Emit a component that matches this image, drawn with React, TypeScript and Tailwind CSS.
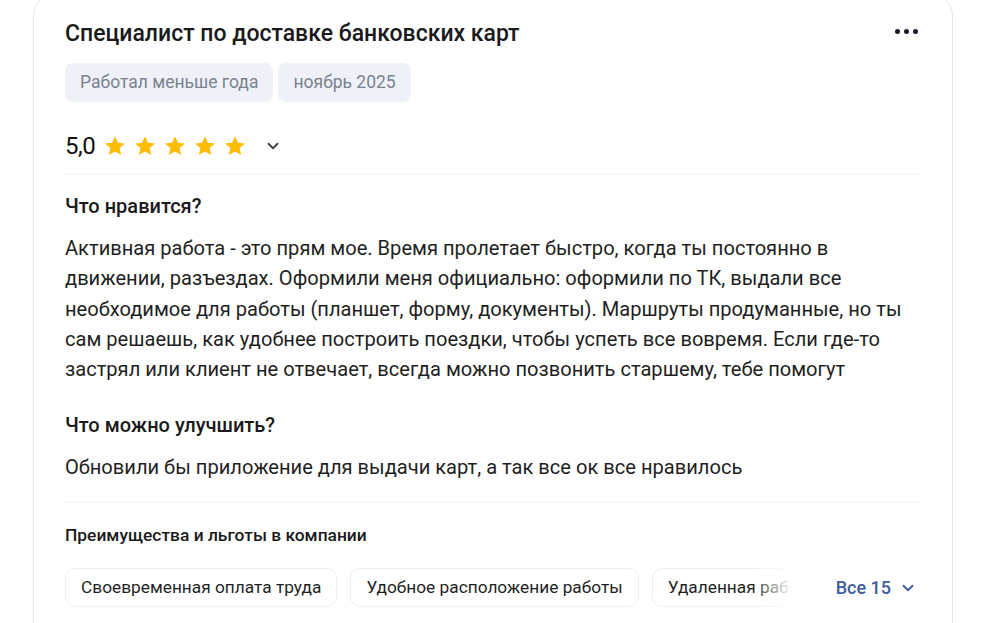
import { ChevronDown } from "lucide-react"

const benefits = ["Своевременная оплата труда", "Удобное расположение работы", "Удаленная работа"]

function Star() {
  return (
    <svg width="24" height="24" viewBox="0 0 24 24" className="shrink-0">
      <path
        d="M12 2.2l2.9 6.6 7.1.6-5.4 4.7 1.6 7-6.2-3.7-6.2 3.7 1.6-7L2 9.4l7.1-.6z"
        fill="#ffbb00"
      />
    </svg>
  )
}

export default function App() {
  return (
    <div className="w-[991px] h-[623px] overflow-hidden bg-white font-['Roboto',sans-serif] text-[#1f1f1f]">
      <div className="ml-[33px] mt-[-8px] w-[920px] h-[660px] rounded-[24px] border border-[#e3e6ed] bg-white pl-[31px] pr-[31px] pt-[26px]">
        <div className="flex items-start justify-between">
          <h2 className="text-[23px] font-medium leading-[30px] text-[#1a1a1a]">
            Специалист по доставке банковских карт
          </h2>
          <div className="flex gap-[4px] pt-[10px] pr-[3px]">
            <span className="w-[5px] h-[5px] rounded-full bg-[#1a1a2a]" />
            <span className="w-[5px] h-[5px] rounded-full bg-[#1a1a2a]" />
            <span className="w-[5px] h-[5px] rounded-full bg-[#1a1a2a]" />
          </div>
        </div>

        <div className="mt-[14px] flex gap-[5px]">
          <span className="h-[39px] flex items-center px-[15px] rounded-[8px] bg-[#eef1f7] text-[17.5px] text-[#7a8190]">
            Работал меньше года
          </span>
          <span className="h-[39px] flex items-center px-[15px] rounded-[8px] bg-[#eef1f7] text-[17.5px] text-[#7a8190]">
            ноябрь 2025
          </span>
        </div>

        <div className="mt-[27px] flex items-center h-[34px]">
          <span className="text-[24px] leading-none tracking-[-0.5px] text-[#111]">5,0</span>
          <div className="ml-[8px] flex gap-[6px]">
            <Star />
            <Star />
            <Star />
            <Star />
            <Star />
          </div>
          <ChevronDown className="ml-[17px] w-[18px] h-[18px] text-[#444]" strokeWidth={2.5} />
        </div>

        <div className="mt-[11px] border-t border-[#eef0f3]" />

        <h3 className="mt-[16px] text-[20px] font-medium leading-[30px] text-[#1a1a1a]">Что нравится?</h3>
        <p className="mt-[12px] text-[20.1px] leading-[30.3px] text-[#1f1f1f]">
          Активная работа - это прям мое. Время пролетает быстро, когда ты постоянно в движении, разъездах.
          Оформили меня официально: оформили по ТК, выдали все необходимое для работы (планшет, форму, документы).
          Маршруты продуманные, но ты сам решаешь, как удобнее построить поездки, чтобы успеть все вовремя. Если
          где-то застрял или клиент не отвечает, всегда можно позвонить старшему, тебе помогут
        </p>

        <h3 className="mt-[26px] text-[20px] font-medium leading-[30px] text-[#1a1a1a]">Что можно улучшить?</h3>
        <p className="mt-[12px] text-[20.1px] leading-[30px] text-[#1f1f1f]">
          Обновили бы приложение для выдачи карт, а так все ок все нравилось
        </p>

        <div className="mt-[20px] border-t border-[#eef0f3]" />

        <h4 className="mt-[20px] text-[17.4px] font-medium leading-[24px] text-[#1a1a1a]">
          Преимущества и льготы в компании
        </h4>

        <div className="mt-[21px] flex items-center">
          <div className="relative flex gap-[13px] overflow-hidden w-[727px]">
            {benefits.map((b) => (
              <span
                key={b}
                className="shrink-0 h-[39px] flex items-center px-[15px] rounded-[10px] border border-[#eceef3] bg-white text-[17.3px] text-[#1f1f1f]"
              >
                {b}
              </span>
            ))}
            <div className="absolute right-0 top-0 h-full w-[40px] bg-gradient-to-r from-transparent to-white" />
          </div>
          <button className="ml-auto mr-[4px] flex items-center gap-[8px] text-[18px] font-medium text-[#3b5d9c]">
            Все 15
            <ChevronDown className="w-[18px] h-[18px]" strokeWidth={2.5} />
          </button>
        </div>
      </div>
    </div>
  )
}
